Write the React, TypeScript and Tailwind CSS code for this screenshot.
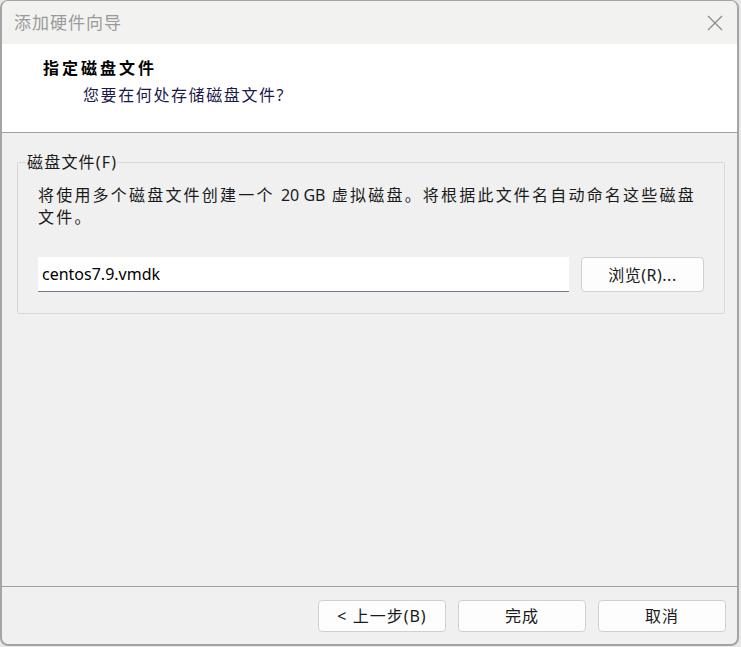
const cjk = "font-['Noto_Sans','Noto_Sans_CJK_SC',sans-serif]";

function DialogButton({ children }: { children: React.ReactNode }) {
  return (
    <button className="flex h-[32px] w-[128px] items-center justify-center rounded-[4px] border border-[#d0d0d0] bg-[#fdfdfd] text-[16px] tracking-[1px] text-[#1a1a1a]">
      {children}
    </button>
  );
}

function CloseIcon() {
  return (
    <svg width="16" height="16" viewBox="0 0 16 16" className="text-[#8a8a8a]">
      <path d="M1 1 L15 15 M15 1 L1 15" stroke="currentColor" strokeWidth="1.2" fill="none" />
    </svg>
  );
}

export default function App() {
  return (
    <div className={`h-[647px] w-[741px] bg-[#e8e8e8] ${cjk}`}>
      <div className="flex h-[646px] w-[739px] flex-col overflow-hidden rounded-[8px] border-[2px] border-r-[2px] border-t-[1px] border-[#a4a4a4] bg-[#f0f0f0]">
        {/* title bar */}
        <div className="flex h-[43px] shrink-0 items-center justify-between bg-[#f2f2f1] pl-[12px] pr-[14px]">
          <span className="text-[17px] tracking-[1px] text-[#9a9a9a]">添加硬件向导</span>
          <CloseIcon />
        </div>

        {/* header */}
        <div className="h-[89px] shrink-0 border-b border-[#a0a0a0] bg-white pl-[41px] pt-[13px]">
          <div className="text-[16px] font-bold leading-[22px] tracking-[3px] text-black">指定磁盘文件</div>
          <div className="pl-[40px] pt-[5px] text-[16px] leading-[22px] tracking-[1.6px] text-[#1a1a4a]">
            您要在何处存储磁盘文件?
          </div>
        </div>

        {/* body */}
        <div className="flex-1 px-[15px] pt-[19px]">
          <fieldset className="h-[162px] rounded-[2px] border border-[#d9d9d9] pb-0 pl-[20px] pr-[20px] pt-0">
            <legend className="ml-[-12px] px-[1px] text-[16px] leading-[20px] tracking-[1.2px] text-[#1a1a1a]">
              磁盘文件(F)
            </legend>
            <p className="mt-[12px] whitespace-nowrap text-[16px] leading-[22px] tracking-[2.2px] text-[#1a1a1a]">
              将使用多个磁盘文件创建一个 <span className="tracking-normal">20 GB</span> 虚拟磁盘。将根据此文件名自动命名这些磁盘
              <br />
              文件。
            </p>
            <div className="mt-[29px] flex items-center gap-[12px]">
              <div className="flex h-[35px] w-[531px] items-center border-b border-[#6e7a8a] bg-white pl-[4px] text-[16px] text-black">
                centos7.9.vmdk
              </div>
              <button className="flex h-[35px] w-[123px] items-center justify-center rounded-[4px] border border-[#d0d0d0] bg-[#fdfdfd] text-[16px] tracking-[0.5px] text-[#1a1a1a]">
                浏览(R)...
              </button>
            </div>
          </fieldset>
        </div>

        {/* footer */}
        <div className="h-[58px] shrink-0 border-t border-[#a0a0a0]">
          <div className="flex justify-end gap-[12px] pr-[11px] pt-[13px]">
            <DialogButton>&lt; 上一步(B)</DialogButton>
            <DialogButton>完成</DialogButton>
            <DialogButton>取消</DialogButton>
          </div>
        </div>
      </div>
    </div>
  );
}
